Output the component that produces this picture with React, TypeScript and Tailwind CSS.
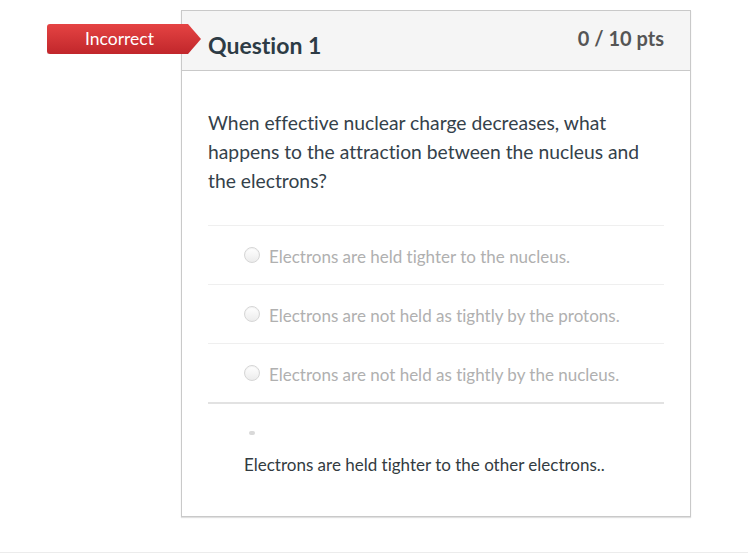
import React from "react";

const options = [
  "Electrons are held tighter to the nucleus.",
  "Electrons are not held as tightly by the protons.",
  "Electrons are not held as tightly by the nucleus.",
];

function Radio() {
  return (
    <span className="block h-4 w-4 shrink-0 rounded-full border border-[#d6d6d6] bg-gradient-to-b from-white to-[#ececec] shadow-[inset_0_1px_1px_rgba(0,0,0,0.05)]" />
  );
}

export default function App() {
  return (
    <div
      className="relative min-h-[554px] bg-white [font-variant-ligatures:none]"
      style={{ fontFamily: "Lato, 'Open Sans', 'Liberation Sans', sans-serif" }}
    >
      <div className="pt-[10px]">
        <div className="ml-[181px] w-[510px] border border-[#c9c9c9] bg-white shadow-[0_1px_1px_rgba(0,0,0,0.12)]">
          <div className="flex h-[60px] items-start justify-between border-b border-[#c9c9c9] bg-[#f5f5f5] px-[26px]">
            <h2 className="pt-[20px] text-[23px] font-bold leading-[28px] text-[#2d3b45]">
              Question 1
            </h2>
            <div className="pt-[15px] text-[20px] font-bold leading-[24px] text-[#555]">
              0 / 10 pts
            </div>
          </div>

          <div className="px-[26px]">
            <p className="pt-[37px] text-[19.3px] leading-[29px] text-[#34414a]">
              When effective nuclear charge decreases, what happens to the attraction between the
              nucleus and the electrons?
            </p>

            <div className="mt-[30px]">
              {options.map((o) => (
                <div
                  key={o}
                  className="flex h-[59px] items-center gap-[9px] border-t border-[#efefef] pl-[36px]"
                >
                  <Radio />
                  <span className="pt-[3px] text-[17px] leading-[24px] text-[#b0b0b0]">{o}</span>
                </div>
              ))}
              <div className="border-t-2 border-[#e2e2e2] pb-[39px] pl-[36px] pt-[27px]">
                <div className="h-[4px]">
                  <span className="ml-[5px] block h-[4px] w-[6px] rounded-full bg-[#d9d9d9]" />
                </div>
                <p className="mt-[18px] text-[17px] leading-[24px] text-[#333b41]">
                  Electrons are held tighter to the other electrons..
                </p>
              </div>
            </div>
          </div>
        </div>
      </div>

      <div className="mt-[35px] h-px bg-[#ececec]" />

      <div className="absolute left-[47px] top-[24px] flex h-[30px] w-[154px] items-center rounded-l-[3px] bg-gradient-to-b from-[#e54343] to-[#c1262b] pl-[38px] pt-[1px] text-[17.5px] text-white shadow-[0_1px_1px_rgba(0,0,0,0.2)] [clip-path:polygon(0_0,calc(100%-13px)_0,100%_50%,calc(100%-13px)_100%,0_100%)]">
        Incorrect
      </div>
    </div>
  );
}
